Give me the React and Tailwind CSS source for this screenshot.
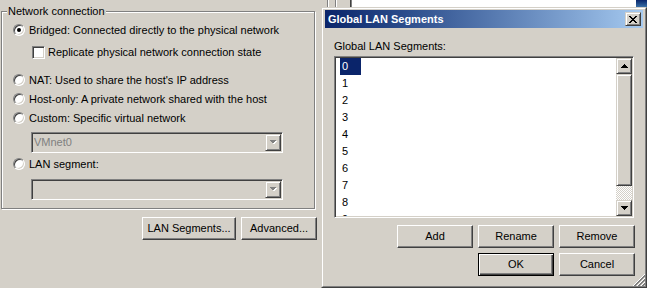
import React from "react";

const raised =
  "border border-t-white border-l-white border-r-[#404040] border-b-[#404040] shadow-[inset_-1px_-1px_0_#808080]";
const raisedSmall =
  "border border-t-[#d4d0c8] border-l-[#d4d0c8] border-r-[#404040] border-b-[#404040] shadow-[inset_1px_1px_0_#fff,inset_-1px_-1px_0_#808080]";
const sunken =
  "border border-t-[#808080] border-l-[#808080] border-r-white border-b-white shadow-[inset_1px_1px_0_#404040,inset_-1px_-1px_0_#d4d0c8]";

function Radio({ checked, label }) {
  return (
    <div className="flex items-center h-[16px] ml-[11px] gap-[4px]">
      <div
        className={`w-[12px] h-[12px] rounded-full bg-white flex items-center justify-center ${sunken}`}
      >
        {checked && <div className="w-[4px] h-[4px] rounded-full bg-black" />}
      </div>
      <span className="leading-[13px]">{label}</span>
    </div>
  );
}

function Combo({ value }) {
  return (
    <div
      className={`ml-[29px] w-[252px] h-[21px] flex items-stretch bg-[#d4d0c8] ${sunken} p-[1px]`}
    >
      <div className="flex-1 flex items-center pl-[1px] text-[#808080] leading-[13px]">
        {value}
      </div>
      <div className={`w-[16px] flex items-center justify-center ${raisedSmall}`}>
        <svg width="8" height="5" viewBox="0 0 8 5" shapeRendering="crispEdges">
          <polygon points="1,1 8,1 4.5,4.5" fill="#fff" />
          <polygon points="0,0 7,0 3.5,3.5" fill="#808080" />
        </svg>
      </div>
    </div>
  );
}

function Btn({ children, w, isDefault }) {
  return (
    <button
      className={`h-[23px] ${w} flex items-center justify-center bg-[#d4d0c8] leading-[13px] ${
        isDefault
          ? "border border-black shadow-[inset_1px_1px_0_#fff,inset_-1px_-1px_0_#404040,inset_-2px_-2px_0_#808080]"
          : raised
      }`}
    >
      {children}
    </button>
  );
}

function Arrow({ up }) {
  return (
    <div className={`h-[16px] flex items-center justify-center bg-[#d4d0c8] ${raisedSmall}`}>
      <svg width="7" height="4" viewBox="0 0 7 4" shapeRendering="crispEdges">
        {up ? (
          <polygon points="0,4 7,4 3.5,0" fill="#000" />
        ) : (
          <polygon points="0,0 7,0 3.5,4" fill="#000" />
        )}
      </svg>
    </div>
  );
}

export default function App() {
  const items = ["0", "1", "2", "3", "4", "5", "6", "7", "8", "9"];
  return (
    <div className="flex w-[647px] h-[288px] overflow-hidden bg-[#d4d0c8] font-['Liberation_Sans',Arial,sans-serif] text-[11px] text-black">
      {/* Virtual machine settings, network page */}
      <div className="w-[321px] shrink-0 flex flex-col">
        <div className="relative ml-[1px] mt-[11px] w-[314px] h-[198px] border border-[#808080] shadow-[inset_1px_1px_0_#fff,1px_1px_0_#fff] flex flex-col">
          <span className="absolute left-[5px] top-[-7px] px-[1px] bg-[#d4d0c8] leading-[13px]">
            Network connection
          </span>
          <div className="mt-[10px]">
            <Radio checked label="Bridged: Connected directly to the physical network" />
          </div>
          <div className="mt-[6px] flex items-center h-[16px] ml-[30px] gap-[3px]">
            <div className={`w-[13px] h-[13px] bg-white ${sunken}`} />
            <span className="leading-[13px]">Replicate physical network connection state</span>
          </div>
          <div className="mt-[12px]">
            <Radio label="NAT: Used to share the host's IP address" />
          </div>
          <div className="mt-[3px]">
            <Radio label="Host-only: A private network shared with the host" />
          </div>
          <div className="mt-[3px]">
            <Radio label="Custom: Specific virtual network" />
          </div>
          <div className="mt-[6px]">
            <Combo value="VMnet0" />
          </div>
          <div className="mt-[3px]">
            <Radio label="LAN segment:" />
          </div>
          <div className="mt-[7px]">
            <Combo value="" />
          </div>
        </div>
        <div className="mt-[8px] w-[317px] flex justify-end gap-[5px]">
          <Btn w="w-[94px]">LAN Segments...</Btn>
          <Btn w="w-[76px]">Advanced...</Btn>
        </div>
      </div>

      {/* Right column: window behind + dialog */}
      <div className="flex-1 flex flex-col min-w-0">
        <div className="h-[7px] flex shrink-0">
          <div className="w-[6px]" />
          <div className="w-[1px] bg-[#808080]" />
          <div className="w-[1px] bg-white" />
          <div className="w-[6px]" />
          <div className="w-[1px] bg-[#808080]" />
          <div className="w-[1px] bg-white" />
          <div className="w-[13px]" />
          <div className="w-[1px] bg-[#404040]" />
          <div className="w-[1px] bg-[#808080]" />
          <div className="flex-1 bg-white" />
          <div className="w-[11px] bg-linear-to-b from-[#0a246a] to-[#3a6ea5]" />
        </div>

        <div className="flex-1 border border-[#d4d0c8] border-r-[#404040] border-b-[#404040]">
          <div className="relative h-full border border-white border-r-[#808080] border-b-[#808080] pt-[1px] px-[2px] pb-[2px] flex flex-col">
            <div className="h-[18px] shrink-0 bg-linear-to-r from-[#0a246a] to-[#a6caf0] flex items-center justify-between pl-[3px] pr-[2px]">
              <span className="text-white font-bold leading-[13px]">Global LAN Segments</span>
              <div className={`w-[16px] h-[14px] bg-[#d4d0c8] flex items-center justify-center ${raisedSmall}`}>
                <svg width="8" height="7" viewBox="0 0 8 7" shapeRendering="crispEdges">
                  <rect x="0" y="0" width="2" height="1" />
                  <rect x="6" y="0" width="2" height="1" />
                  <rect x="1" y="1" width="2" height="1" />
                  <rect x="5" y="1" width="2" height="1" />
                  <rect x="2" y="2" width="4" height="1" />
                  <rect x="3" y="3" width="2" height="1" />
                  <rect x="2" y="4" width="4" height="1" />
                  <rect x="1" y="5" width="2" height="1" />
                  <rect x="5" y="5" width="2" height="1" />
                  <rect x="0" y="6" width="2" height="1" />
                  <rect x="6" y="6" width="2" height="1" />
                </svg>
              </div>
            </div>

            <div className="flex flex-col pl-[9px] pr-[8px]">
              <div className="mt-[12px] leading-[13px]">Global LAN Segments:</div>
              <div className={`mt-[3px] mr-[1px] h-[162px] flex bg-white ${sunken} p-[1px]`}>
                <div className="flex-1 overflow-hidden pl-[4px] flex flex-col">
                  {items.map((it, i) => (
                    <div key={it} className="h-[17px] shrink-0 flex items-center">
                      <span
                        className={`w-[21px] h-full pl-[2px] flex items-center leading-[13px] ${
                          i === 0 ? "bg-[#0a246a] text-white" : ""
                        }`}
                      >
                        {it}
                      </span>
                    </div>
                  ))}
                </div>
                <div className="w-[16px] flex flex-col">
                  <Arrow up />
                  <div className={`h-[112px] bg-[#d4d0c8] ${raisedSmall}`} />
                  <div className="flex-1 bg-[repeating-conic-gradient(#fff_0_25%,#d4d0c8_0_50%)] bg-size-[2px_2px]" />
                  <Arrow />
                </div>
              </div>
              <div className="mt-[7px] flex justify-end gap-[5px]">
                <Btn w="w-[76px]">Add</Btn>
                <Btn w="w-[76px]">Rename</Btn>
                <Btn w="w-[76px]">Remove</Btn>
              </div>
              <div className="mt-[5px] flex justify-end gap-[5px]">
                <Btn w="w-[76px]" isDefault>
                  OK
                </Btn>
                <Btn w="w-[76px]">Cancel</Btn>
              </div>
            </div>

            <svg
              className="absolute right-0 bottom-0"
              width="12"
              height="12"
              viewBox="0 0 12 12"
            >
              {[0, 4, 8].map((k) => (
                <g key={k}>
                  <line x1={12} y1={k} x2={k} y2={12} stroke="#fff" strokeWidth="1" />
                  <line x1={12} y1={k + 1} x2={k + 1} y2={12} stroke="#808080" strokeWidth="1" />
                  <line x1={12} y1={k + 2} x2={k + 2} y2={12} stroke="#808080" strokeWidth="1" />
                </g>
              ))}
            </svg>
          </div>
        </div>
      </div>
    </div>
  );
}
